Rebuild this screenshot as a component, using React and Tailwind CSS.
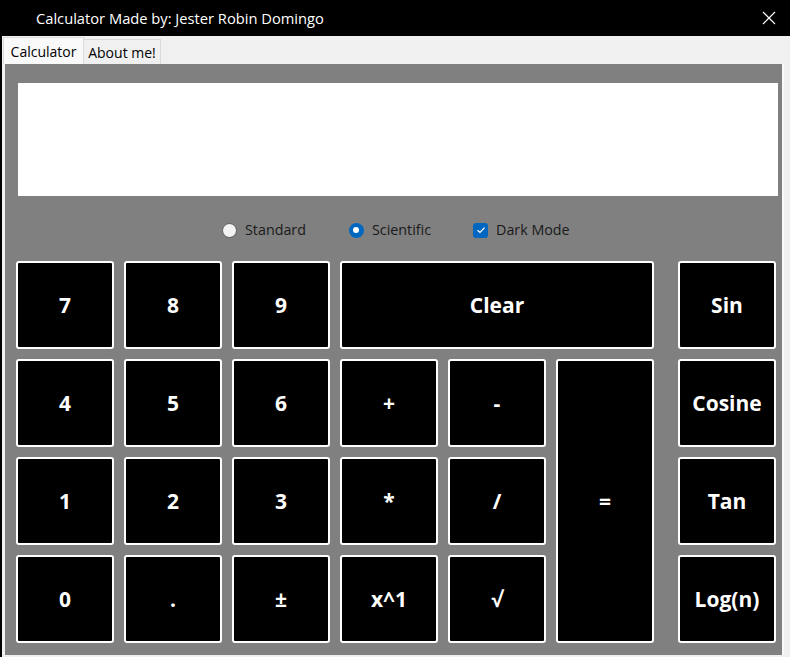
import React, { useState } from 'react';

const font = { fontFamily: '"Open Sans", "Noto Sans", sans-serif' };

const CalcButton = ({ label, className = '' }) => (
  <button
    className={`bg-black border-2 border-white rounded-[3px] text-white font-bold text-[21px] pt-[2px] flex items-center justify-center ${className}`}
  >
    {label}
  </button>
);

const App = () => {
  const [mode, setMode] = useState('scientific');
  const [dark, setDark] = useState(true);

  return (
    <div
      className="w-[790px] h-[657px] bg-[#f0f0f0] border-l-2 border-black flex flex-col overflow-hidden"
      style={font}
    >
      {/* Title bar */}
      <div className="h-[36px] bg-black flex items-center justify-between shrink-0 -ml-[2px]">
        <span className="text-white text-[14.7px] ml-[36px]">
          Calculator Made by: Jester Robin Domingo
        </span>
        <svg width="14" height="14" viewBox="0 0 14 14" className="mr-[14px]">
          <path d="M1 1 L13 13 M13 1 L1 13" stroke="white" strokeWidth="1.2" />
        </svg>
      </div>

      {/* Tabs */}
      <div className="h-[28px] flex items-end pl-[1px] shrink-0">
        <div className="h-[27px] w-[81px] bg-[#f9f9f9] border border-b-0 border-[#dcdcdc] flex items-center justify-center text-[14px] text-black">
          Calculator
        </div>
        <div className="h-[25px] w-[77px] bg-[#f0f0f0] border border-b-0 border-l-0 border-[#d9d9d9] flex items-center justify-center text-[14px] text-black">
          About me!
        </div>
      </div>

      {/* Panel */}
      <div className="ml-[3px] w-[779px] h-[591px] bg-[#808080] border-r-2 border-[#f9f9f9] pt-[19px] pl-[11px] flex flex-col">
        <div className="ml-[2px] w-[760px] h-[113px] bg-white" />

        <div className="h-[65px] pt-[3px] flex items-center text-[14.3px] text-[#1a1a1a]">
          <label className="flex items-center ml-[206px] cursor-pointer" onClick={() => setMode('standard')}>
            <span
              className={`w-[15px] h-[15px] rounded-full flex items-center justify-center ${
                mode === 'standard' ? 'bg-[#0067c0]' : 'bg-[#f3f3f3] border border-[#5a5a5a]'
              }`}
            >
              {mode === 'standard' && <span className="w-[6px] h-[6px] rounded-full bg-white" />}
            </span>
            <span className="ml-[8px]">Standard</span>
          </label>
          <label className="flex items-center ml-[43px] cursor-pointer" onClick={() => setMode('scientific')}>
            <span
              className={`w-[15px] h-[15px] rounded-full flex items-center justify-center ${
                mode === 'scientific' ? 'bg-[#0067c0]' : 'bg-[#f3f3f3] border border-[#5a5a5a]'
              }`}
            >
              {mode === 'scientific' && <span className="w-[6px] h-[6px] rounded-full bg-white" />}
            </span>
            <span className="ml-[8px]">Scientific</span>
          </label>
          <label className="flex items-center ml-[42px] cursor-pointer" onClick={() => setDark(!dark)}>
            <span
              className={`w-[15px] h-[15px] rounded-[3px] flex items-center justify-center ${
                dark ? 'bg-[#0067c0]' : 'bg-[#f3f3f3] border border-[#5a5a5a]'
              }`}
            >
              {dark && (
                <svg width="10" height="10" viewBox="0 0 10 10">
                  <path d="M1.5 5.2 L4 7.5 L8.6 2.6" stroke="white" strokeWidth="1.2" fill="none" />
                </svg>
              )}
            </span>
            <span className="ml-[8px]">Dark Mode</span>
          </label>
        </div>

        {/* Keypad */}
        <div className="flex gap-[24px]">
          <div className="grid grid-cols-[repeat(6,98px)] grid-rows-[repeat(4,88px)] gap-[10px]">
            <CalcButton label="7" />
            <CalcButton label="8" />
            <CalcButton label="9" />
            <CalcButton label="Clear" className="col-span-3" />
            <CalcButton label="4" />
            <CalcButton label="5" />
            <CalcButton label="6" />
            <CalcButton label="+" />
            <CalcButton label="-" />
            <CalcButton label="=" className="row-span-3" />
            <CalcButton label="1" />
            <CalcButton label="2" />
            <CalcButton label="3" />
            <CalcButton label="*" />
            <CalcButton label="/" />
            <CalcButton label="0" />
            <CalcButton label="." />
            <CalcButton label="±" />
            <CalcButton label="x^1" />
            <CalcButton label="√" />
          </div>
          <div className="grid grid-cols-[98px] grid-rows-[repeat(4,88px)] gap-[10px]">
            <CalcButton label="Sin" />
            <CalcButton label="Cosine" />
            <CalcButton label="Tan" />
            <CalcButton label="Log(n)" />
          </div>
        </div>
      </div>
    </div>
  );
};

export default App;
